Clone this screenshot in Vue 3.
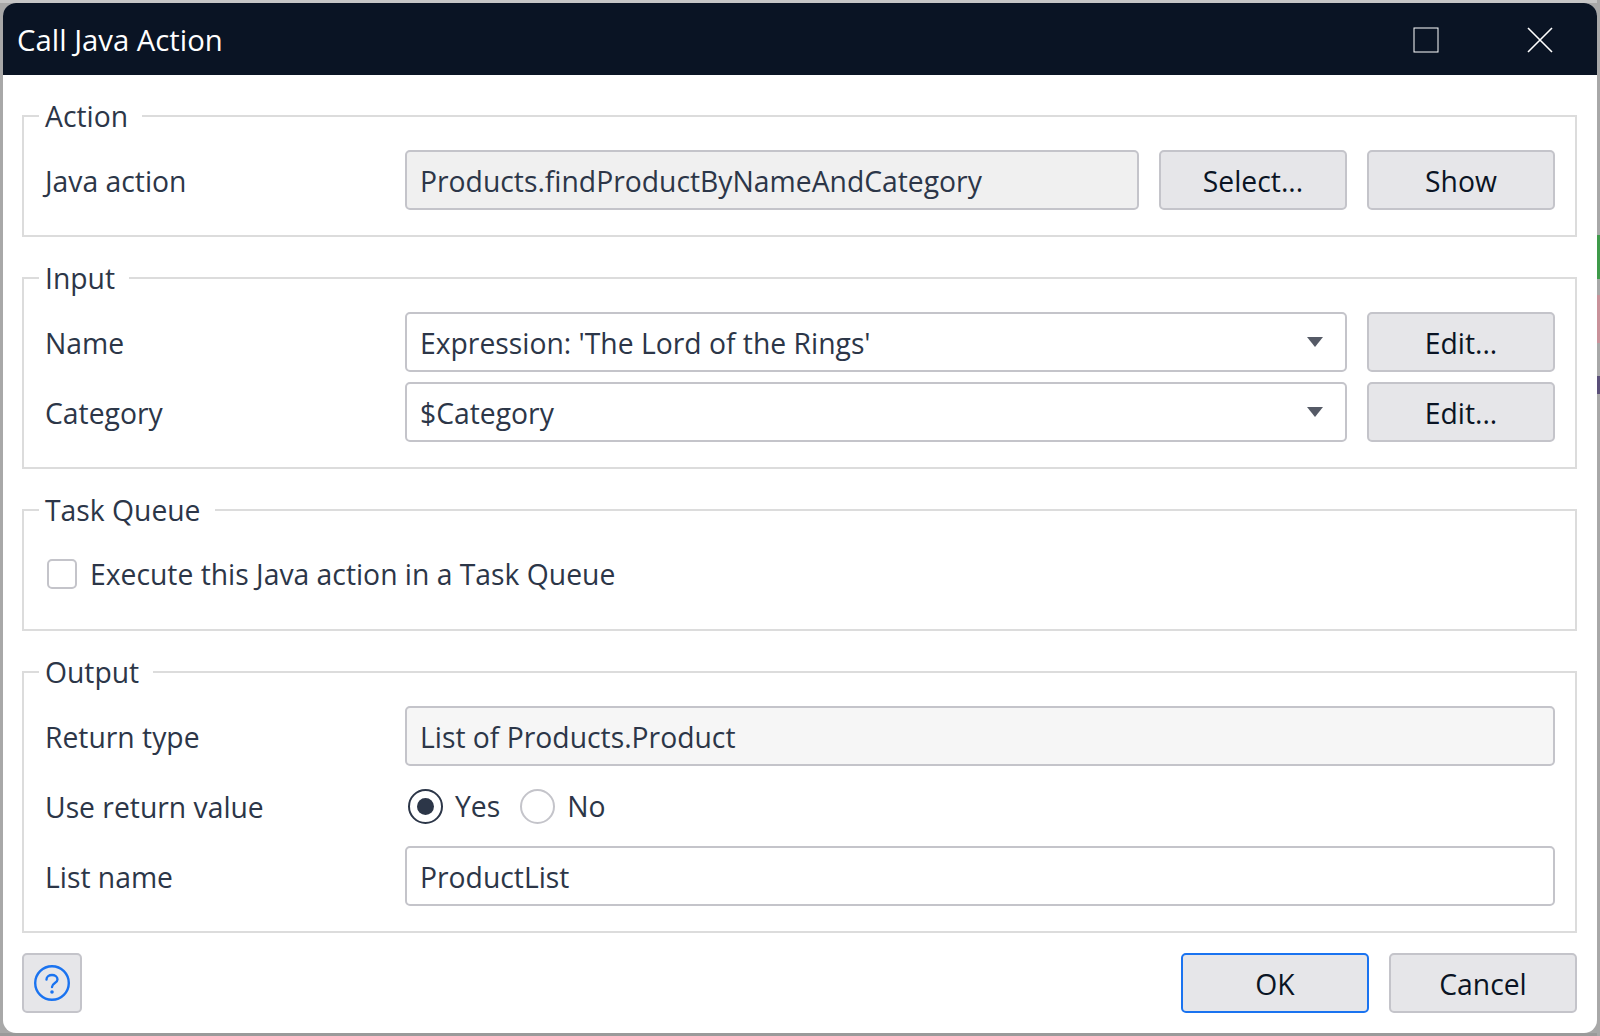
<template>
  <div class="win">
    <div class="titlebar">
      <span class="title">Call Java Action</span>
      <div class="win-btns">
        <svg width="26" height="26" viewBox="0 0 26 26"><rect x="1" y="1" width="24" height="24" fill="none" stroke="#fff" stroke-width="1" /></svg>
        <svg width="26" height="26" viewBox="0 0 26 26"><path d="M1 1 L25 25 M25 1 L1 25" stroke="#fff" stroke-width="1.6" fill="none" /></svg>
      </div>
    </div>

    <div class="body">
      <fieldset class="group">
        <legend>Action</legend>
        <div class="row">
          <label class="lbl">Java action</label>
          <div class="field readonly grow">Products.findProductByNameAndCategory</div>
          <button class="btn">Select...</button>
          <button class="btn">Show</button>
        </div>
      </fieldset>

      <fieldset class="group">
        <legend>Input</legend>
        <div v-for="arg in args" :key="arg.name" class="row">
          <label class="lbl">{{ arg.name }}</label>
          <div class="field combo grow">
            <span>{{ arg.value }}</span>
            <span class="caret"></span>
          </div>
          <button class="btn">Edit...</button>
        </div>
      </fieldset>

      <fieldset class="group">
        <legend>Task Queue</legend>
        <div class="check-row">
          <span class="check"></span>
          <span>Execute this Java action in a Task Queue</span>
        </div>
      </fieldset>

      <fieldset class="group">
        <legend>Output</legend>
        <div class="row">
          <label class="lbl">Return type</label>
          <div class="field readonly2 grow">List of Products.Product</div>
        </div>
        <div class="row">
          <label class="lbl">Use return value</label>
          <div class="radios">
            <span class="radio on"></span><span class="radio-text">Yes</span>
            <span class="radio"></span><span class="radio-text">No</span>
          </div>
        </div>
        <div class="row">
          <label class="lbl">List name</label>
          <div class="field grow">ProductList</div>
        </div>
      </fieldset>

      <div class="footer">
        <button class="btn help">
          <svg width="36" height="36" viewBox="0 0 36 36" fill="none" stroke="#1a73f0" stroke-width="2.4">
            <circle cx="18" cy="18" r="16.8" />
            <path d="M12.5 14.5 C12.5 8.5 23.5 8.5 23.5 14.5 C23.5 18 18 18 18 22" stroke-linecap="round" />
            <circle cx="18" cy="27" r="1.8" fill="#1a73f0" stroke="none" />
          </svg>
        </button>
        <div class="footer-right">
          <button class="btn primary">OK</button>
          <button class="btn">Cancel</button>
        </div>
      </div>
    </div>
  </div>
</template>

<script setup>
const args = [
  { name: 'Name', value: "Expression: 'The Lord of the Rings'" },
  { name: 'Category', value: '$Category' }
]
</script>

<style>
html, body { overflow: hidden; }
html {
  background:
    linear-gradient(#a8a8a8 235px, #3f9a4a 235px, #3f9a4a 279px, #a8a8a8 279px, #a8a8a8 295px, #c9929a 295px, #c9929a 343px, #a8a8a8 343px, #a8a8a8 376px, #5a4f78 376px, #5a4f78 394px, #a8a8a8 394px) right top / 3px 100% no-repeat,
    linear-gradient(#c6c6c6 3px, #a8a8a8 3px, #a8a8a8 1033px, #9a9a9a 1033px);
}
</style>

<style scoped>
.win {
  box-sizing: border-box;
  width: 1594px;
  height: 1030px;
  margin: 3px;
  background: #fff;
  border-radius: 13px;
  overflow: hidden;
  font-family: "Open Sans", "Noto Sans", sans-serif;
  font-size: 28.3px;
  color: #2c3648;
}

.titlebar {
  height: 72px;
  background: #0a1424;
  color: #fff;
  display: flex;
  align-items: center;
  justify-content: space-between;
  padding: 0 44px 0 14px;
}
.title { font-size: 29.3px; padding-top: 2px; }
.win-btns { display: flex; gap: 88px; align-items: center; margin-top: 1px; }
.win-btns svg { display: block; }

.body {
  padding: 21px 20px 0 19px;
  display: flex;
  flex-direction: column;
  gap: 21px;
}

.group {
  margin: 0;
  padding: 14px 20px 25px 21px;
  border: 2px solid #dcdcdc;
  min-width: 0;
  display: flex;
  flex-direction: column;
  gap: 10px;
}
.group legend {
  margin-left: -6px;
  padding: 0 14px 0 6px;
  line-height: 40px;
}

.row {
  display: flex;
  align-items: center;
  gap: 20px;
  height: 60px;
}
.lbl { width: 340px; flex: none; padding-top: 2px; }
.grow { flex: 1; min-width: 0; }

.field {
  box-sizing: border-box;
  height: 60px;
  border: 2px solid #c4c4ca;
  border-radius: 5px;
  background: #fff;
  padding: 2px 13px 0;
  display: flex;
  align-items: center;
  justify-content: space-between;
}
.readonly { background: #f0f0f0; }
.readonly2 { background: #f6f6f6; }
.caret {
  width: 0;
  height: 0;
  border-left: 8px solid transparent;
  border-right: 8px solid transparent;
  border-top: 10px solid #555a66;
  margin: -2px 9px 0 0;
}

.btn {
  box-sizing: border-box;
  width: 188px;
  height: 60px;
  flex: none;
  border: 2px solid #c4c4ca;
  border-radius: 5px;
  background: #e6e6e9;
  color: #0a1424;
  font-family: inherit;
  font-size: 28.3px;
  padding: 2px 0 0;
}
.btn.primary { border-color: #1a73f0; }
.btn.help {
  width: 60px;
  padding: 0;
  display: flex;
  align-items: center;
  justify-content: center;
}

.check-row {
  display: flex;
  align-items: center;
  gap: 13px;
  height: 60px;
  margin-left: 2px;
}
.check {
  box-sizing: border-box;
  width: 30px;
  height: 30px;
  border: 2px solid #c4c4ca;
  border-radius: 5px;
}

.radios { display: flex; align-items: center; }
.radio {
  box-sizing: border-box;
  width: 35px;
  height: 35px;
  border: 2px solid #c4c4ca;
  border-radius: 50%;
  display: flex;
  align-items: center;
  justify-content: center;
  margin-right: 12px;
  margin-left: 3px;
}
.radio.on { border-color: #2c3648; }
.radio.on::after {
  content: "";
  width: 17px;
  height: 17px;
  border-radius: 50%;
  background: #2c3648;
}
.radio-text { margin-right: 17px; }

.footer {
  display: flex;
  justify-content: space-between;
  margin-top: -1px;
}
.footer-right { display: flex; gap: 20px; }
</style>
